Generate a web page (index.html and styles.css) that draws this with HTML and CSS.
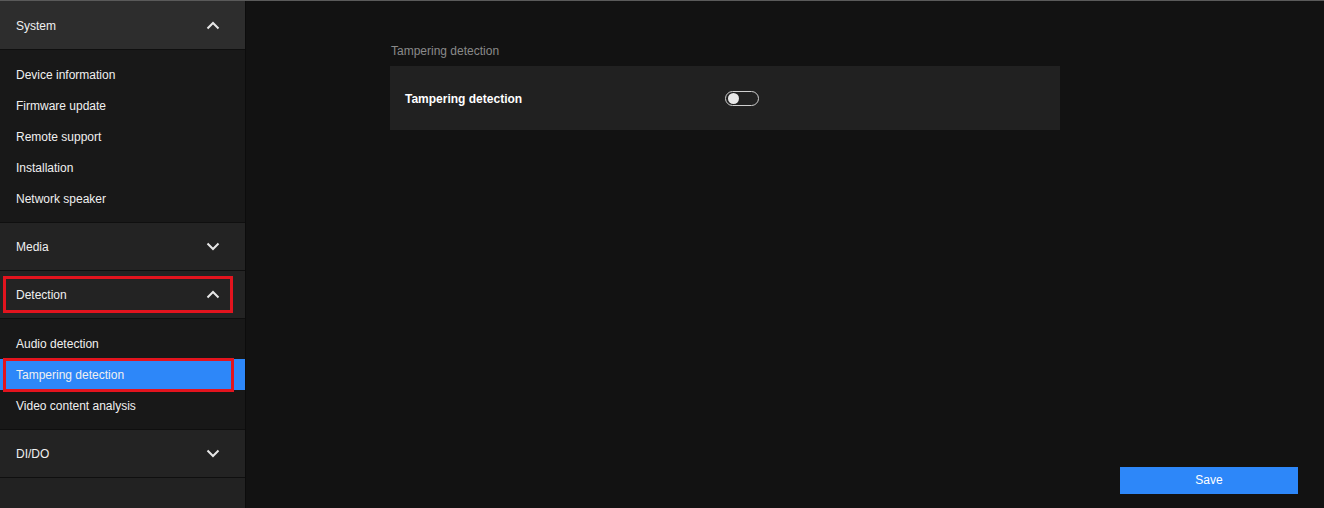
FILE: index.html
```html
<!DOCTYPE html>
<html lang="en">
<head>
    <meta charset="UTF-8">
    <title>Tampering detection</title>
    <link rel="stylesheet" href="styles.css">
</head>
<body>
    <div class="page">
        <aside class="sidebar">
            <div class="group">
                <div class="group-head head-open">
                    <span>System</span>
                    <svg class="chev" width="14" height="9" viewBox="0 0 14 9"><path d="M1.5 7.5 L7 2 L12.5 7.5" fill="none" stroke="#e6e6e6" stroke-width="2"/></svg>
                </div>
                <ul class="group-list">
                    <li>Device information</li>
                    <li>Firmware update</li>
                    <li>Remote support</li>
                    <li>Installation</li>
                    <li>Network speaker</li>
                </ul>
            </div>
            <div class="group">
                <div class="group-head">
                    <span>Media</span>
                    <svg class="chev" width="14" height="9" viewBox="0 0 14 9"><path d="M1.5 1.5 L7 7 L12.5 1.5" fill="none" stroke="#e6e6e6" stroke-width="2"/></svg>
                </div>
            </div>
            <div class="group">
                <div class="group-head marked">
                    <span>Detection</span>
                    <svg class="chev" width="14" height="9" viewBox="0 0 14 9"><path d="M1.5 7.5 L7 2 L12.5 7.5" fill="none" stroke="#e6e6e6" stroke-width="2"/></svg>
                </div>
                <ul class="group-list">
                    <li>Audio detection</li>
                    <li class="active marked">Tampering detection</li>
                    <li>Video content analysis</li>
                </ul>
            </div>
            <div class="group">
                <div class="group-head">
                    <span>DI/DO</span>
                    <svg class="chev" width="14" height="9" viewBox="0 0 14 9"><path d="M1.5 1.5 L7 7 L12.5 1.5" fill="none" stroke="#e6e6e6" stroke-width="2"/></svg>
                </div>
            </div>
            <div class="group-rest"></div>
        </aside>

        <main class="content">
            <div class="section">
                <p class="section-title">Tampering detection</p>
                <div class="card">
                    <span class="card-label">Tampering detection</span>
                    <span class="switch"><span class="knob"></span></span>
                </div>
            </div>
            <div class="actions">
                <button class="save">Save</button>
            </div>
        </main>
    </div>
</body>
</html>
```

FILE: styles.css
```css
html, body {
    margin: 0;
    padding: 0;
    height: 100%;
    background-color: #121212;
    font-family: 'Liberation Sans', Arial, sans-serif;
    font-size: 12px;
    color: #f0f0f0;
}
.page {
    display: flex;
    height: 508px;
    box-sizing: border-box;
    border-top: 1px solid #5a5a5a;
}
.sidebar {
    width: 245px;
    flex-shrink: 0;
    background-color: #181818;
    border-right: 1px solid #0c0c0c;
    display: flex;
    flex-direction: column;
}
.group {
    border-bottom: 1px solid #0f0f0f;
}
.group-head {
    position: relative;
    height: 47px;
    display: flex;
    align-items: center;
    justify-content: space-between;
    padding: 0 25px 0 16px;
    background-color: #232323;
    border-bottom: 1px solid #0f0f0f;
}
.group-head span {
    padding-top: 1px;
}
.group-head.head-open {
    background-color: #2d2d2d;
    height: 48px;
}
.group-head.head-open span {
    padding-top: 2px;
}
.group .group-head:last-child {
    border-bottom: none;
}
.group-list {
    list-style-type: none;
    margin: 0;
    padding: 9px 0 8px 0;
    background-color: #181818;
}
.group-list li {
    position: relative;
    height: 30px;
    padding-top: 1px;
    line-height: 30px;
    padding-left: 16px;
}
.group-list li.active {
    background-color: #2d87f9;
}
.marked::after {
    content: "";
    position: absolute;
    left: 3px;
    top: 5px;
    right: 12px;
    bottom: 5px;
    border: 3px solid #e3141e;
    pointer-events: none;
}
.group-list li.marked::after {
    top: -1px;
    bottom: -2px;
    right: 11px;
}
.group-rest {
    flex: 1;
    background-color: #222222;
}
.content {
    flex: 1;
    display: flex;
    flex-direction: column;
    justify-content: space-between;
    padding: 41px 26px 14px 144px;
}
.section {
    width: 670px;
}
.section-title {
    margin: 0 0 7px 1px;
    padding-top: 1px;
    color: #8a8a8a;
    line-height: 16px;
}
.card {
    height: 64px;
    background-color: #212121;
    display: flex;
    align-items: center;
    padding: 0 15px;
}
.card-label {
    width: 320px;
    padding-top: 1px;
    font-weight: bold;
    color: #ffffff;
}
.switch {
    width: 29px;
    height: 13px;
    border: 1.5px solid #cfcfcf;
    border-radius: 9px;
    display: flex;
    align-items: center;
    padding: 0 1.5px;
}
.knob {
    width: 11px;
    height: 11px;
    border-radius: 50%;
    background-color: #e8e8e8;
}
.actions {
    display: flex;
    justify-content: flex-end;
}
.save {
    width: 178px;
    height: 27px;
    padding: 0 0 2px 0;
    border: none;
    background-color: #2d87f9;
    color: #ffffff;
    font-family: 'Liberation Sans', Arial, sans-serif;
    font-size: 12px;
}
```
